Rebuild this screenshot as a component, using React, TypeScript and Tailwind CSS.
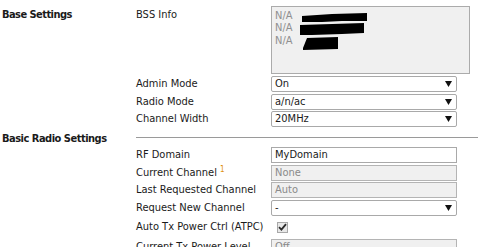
import React from 'react';

// ─── small form pieces ─────────────────────────────────────────────────────────
function Arrow() {
  return (
    <svg width="7" height="6" viewBox="0 0 7 6" className="shrink-0">
      <path d="M0 0H7L3.5 6Z" fill="#111" />
    </svg>
  );
}

function Select({ value }: { value: string }) {
  return (
    <div className="flex h-full w-[186px] items-center justify-between rounded-[2px] border border-[#a9a9a9] bg-white pl-[3px] pr-[4px] text-[#1a1a1a]">
      <span>{value}</span>
      <Arrow />
    </div>
  );
}

function Input({ value, disabled }: { value: string; disabled?: boolean }) {
  return (
    <div
      className={
        disabled
          ? 'flex h-full w-[186px] items-center border border-[#b4b4b4] bg-[#f0f0f0] pl-[3px] text-[#8a8a8a]'
          : 'flex h-full w-[186px] items-center border border-[#a9a9a9] bg-white pl-[3px] text-[#1a1a1a]'
      }
    >
      {value}
    </div>
  );
}

function Row({
  label,
  rowClass,
  children,
}: {
  label?: React.ReactNode;
  rowClass: string;
  children?: React.ReactNode;
}) {
  return (
    <div className={`flex ${rowClass}`}>
      <div className="w-[136px] shrink-0" />
      <div className="flex w-[135px] shrink-0 items-center whitespace-nowrap">{label}</div>
      <div className="h-full">{children}</div>
    </div>
  );
}

export default function App() {
  return (
    <div className="h-[247px] w-[478px] overflow-hidden bg-white font-['DejaVu_Sans_Condensed','Liberation_Sans',sans-serif] text-[11px] leading-[14px] text-[#1a1a1a]">
      {/* ─── Base Settings ─────────────────────────────────────────────── */}
      <div className="mt-[6px] flex h-[68px]">
        <div className="w-[136px] shrink-0 pl-[2px] pt-[2px] font-bold tracking-[-0.55px]">Base Settings</div>
        <div className="w-[135px] shrink-0 pt-[2px]">BSS Info</div>
        <div className="relative h-full w-[199px] border border-[#ababab] bg-[#f0f0f0] pl-[3px] pt-[3px] leading-[12.3px] text-[#8f8f8f]">
          <div>N/A</div>
          <div>N/A</div>
          <div>N/A</div>
          <svg className="absolute left-0 top-0" width="199" height="68" viewBox="0 0 199 68">
            <path d="M30 9 L60 7 L95 6 L95 14 L70 14 L50 15 L30 15 Z" fill="#000" />
            <path d="M28 18 L60 17 L92 16 L92 26 L70 27 L40 28 L28 28 Z" fill="#000" />
            <path d="M31 41 L35 31 L66 30 L66 42 L31 43 Z" fill="#000" />
          </svg>
        </div>
      </div>

      <Row label="Admin Mode" rowClass="mt-[2px] h-[16px]">
        <Select value="On" />
      </Row>
      <Row label="Radio Mode" rowClass="mt-[1.5px] h-[16px]">
        <Select value="a/n/ac" />
      </Row>
      <Row label="Channel Width" rowClass="mt-[1.5px] h-[16px]">
        <Select value="20MHz" />
      </Row>

      {/* ─── Basic Radio Settings ──────────────────────────────────────── */}
      <div className="flex h-[20px] items-center">
        <div className="w-[136px] shrink-0 pl-[2px] pt-[3px] font-bold tracking-[-0.5px]">Basic Radio Settings</div>
        <div className="mt-[1px] flex-1 border-t border-[#9a9a9a]" />
      </div>

      <Row label="RF Domain" rowClass="h-[16px]">
        <Input value="MyDomain" />
      </Row>
      <Row
        label={
          <span>
            Current Channel <sup className="text-[8px] text-[#e0900a]">1</sup>
          </span>
        }
        rowClass="mt-[1.5px] h-[16px]"
      >
        <Input value="None" disabled />
      </Row>
      <Row label="Last Requested Channel" rowClass="mt-[1.5px] h-[16px]">
        <Input value="Auto" disabled />
      </Row>
      <Row label="Request New Channel" rowClass="mt-[1.5px] h-[16px]">
        <Select value="-" />
      </Row>
      <Row label="Auto Tx Power Ctrl (ATPC)" rowClass="mt-[1.5px] h-[20px]">
        <div className="flex h-full items-center pl-[6px]">
          <div className="flex h-[11px] w-[11px] items-center justify-center border border-[#a8a8a8] bg-[#e8e8e8]">
            <svg width="9" height="8" viewBox="0 0 9 8">
              <path d="M1 4.2 L3.4 6.6 L8 1.2" stroke="#2a2a2a" strokeWidth="1.8" fill="none" />
            </svg>
          </div>
        </div>
      </Row>
      <Row label="Current Tx Power Level" rowClass="mt-[2px] h-[16px]">
        <Input value="Off" disabled />
      </Row>
    </div>
  );
}
